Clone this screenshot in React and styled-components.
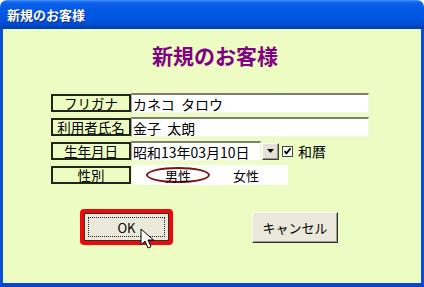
import React from "react";
import styled, { createGlobalStyle } from "styled-components";

const Global = createGlobalStyle`
  html, body { margin: 0; padding: 0; }
  body { width: 424px; height: 287px; overflow: hidden; font-family: "Noto Sans CJK JP", "Noto Sans", sans-serif; }
`;

const Win = styled.div`
  width: 424px;
  height: 287px;
  display: flex;
  flex-direction: column;
  box-sizing: border-box;
  position: relative;
`;

const TitleBar = styled.div`
  height: 29px;
  flex: none;
  border-radius: 7px 7px 0 0;
  background: linear-gradient(#4a9aff 0, #1469ee 2px, #0a5ce6 5px, #0058e4 12px, #0255e0 20px, #0049cc 25px, #003ead 29px);
  display: flex;
  align-items: center;
  padding-left: 7px;
  color: #fff;
  font-size: 13px;
  font-weight: bold;
  text-shadow: 1px 1px 0 #0a2a80;
`;

const Body = styled.div`
  flex: 1;
  background: #ecfcc2;
  border-left: 3px solid #0a4fd8;
  border-right: 3px solid #0a4fd8;
  border-bottom: 4px solid #0a46cc;
  display: flex;
  flex-direction: column;
  align-items: stretch;
`;

const Heading = styled.div`
  margin-top: 13px;
  text-align: center;
  padding-left: 6px;
  color: #820082;
  font-size: 21px;
  font-weight: bold;
  line-height: 26px;
`;

const Form = styled.div`
  margin-top: 25px;
  margin-left: 48px;
  display: flex;
  flex-direction: column;
  gap: 4px;
`;

const Row = styled.div`
  display: flex;
  align-items: center;
  height: 20px;
`;

const Label = styled.div`
  width: 80px;
  height: 18px;
  box-sizing: border-box;
  border: 2px solid #22261a;
  display: flex;
  align-items: center;
  justify-content: center;
  font-size: 13.5px;
  line-height: 14px;
  color: #000;
  flex: none;
`;

const Field = styled.div`
  width: ${(p) => p.$w}px;
  height: 20px;
  box-sizing: border-box;
  background: #fff;
  border-top: 2px solid #7d7f70;
  border-left: 1px solid #a5a896;
  border-right: 1px solid #f4f6ea;
  border-bottom: 1px solid #f4f6ea;
  display: flex;
  align-items: center;
  padding-left: 1px;
  font-size: 14px;
  color: #000;
  white-space: pre;
  flex: none;
`;

const Drop = styled.div`
  width: 17px;
  height: 17px;
  margin-left: 1px;
  box-sizing: border-box;
  background: #e4e2d6;
  border-top: 1px solid #fff;
  border-left: 1px solid #fff;
  border-right: 1px solid #404040;
  border-bottom: 1px solid #404040;
  box-shadow: inset -1px -1px 0 #9a988c;
  display: flex;
  align-items: center;
  justify-content: center;
`;

const Check = styled.div`
  width: 11px;
  height: 11px;
  margin-left: 3px;
  box-sizing: border-box;
  background: #fff;
  border: 1px solid #444;
  display: flex;
  align-items: center;
  justify-content: center;
`;

const CheckText = styled.span`
  margin-left: 5px;
  font-size: 14px;
  color: #000;
`;

const GenderBox = styled.div`
  width: 156px;
  height: 20px;
  margin-left: 1px;
  background: #fff;
  display: flex;
  align-items: center;
  font-size: 13px;
  color: #000;
  flex: none;
`;

const Option = styled.div`
  width: ${(p) => p.$w}px;
  height: 16px;
  margin-left: ${(p) => p.$ml}px;
  box-sizing: border-box;
  display: flex;
  align-items: center;
  justify-content: center;
  border: ${(p) => (p.$sel ? "2px solid #7d1414" : "none")};
  border-radius: 50%;
`;

const Buttons = styled.div`
  margin-top: 24px;
  display: flex;
  align-items: flex-start;
`;

const Focus = styled.div`
  margin-left: 77px;
  width: 93px;
  height: 36px;
  box-sizing: border-box;
  border: 4px solid #ee0a0a;
  border-radius: 4px;
  display: flex;
  position: relative;
`;

const Btn = styled.div`
  box-sizing: border-box;
  width: ${(p) => p.$w}px;
  height: ${(p) => p.$h}px;
  margin-left: ${(p) => p.$ml || 0}px;
  margin-top: ${(p) => p.$mt || 0}px;
  background: #ebe9dc;
  border-top: 1px solid #fff;
  border-left: 1px solid #fff;
  border-right: 1px solid #303030;
  border-bottom: 1px solid #303030;
  box-shadow: inset -1px -1px 0 #a09e90;
  display: flex;
  align-items: center;
  justify-content: center;
  font-size: 13px;
  color: #000;
  position: relative;
`;

const OkBtn = styled(Btn)`
  border: 1px solid #303030;
  box-shadow: none;
  flex: 1;
`;

const Dotted = styled.div`
  position: absolute;
  inset: 3px;
  border: 1px dotted #222;
`;

const Cursor = styled.svg`
  position: absolute;
  left: 56px;
  top: 15px;
`;

export default function App() {
  return (
    <>
      <Global />
      <Win>
        <TitleBar>新規のお客様</TitleBar>
        <Body>
          <Heading>新規のお客様</Heading>
          <Form>
            <Row>
              <Label>フリガナ</Label>
              <Field $w={238}>カネコ  タロウ</Field>
            </Row>
            <Row>
              <Label>利用者氏名</Label>
              <Field $w={238}>金子  太朗</Field>
            </Row>
            <Row>
              <Label>生年月日</Label>
              <Field $w={130}>昭和13年03月10日</Field>
              <Drop>
                <svg width="7" height="4" viewBox="0 0 7 4">
                  <path d="M0 0h7L3.5 4z" fill="#000" />
                </svg>
              </Drop>
              <Check>
                <svg width="9" height="9" viewBox="0 0 9 9">
                  <path d="M1.5 4.2l2 2.2 4-5" stroke="#000" strokeWidth="1.8" fill="none" />
                </svg>
              </Check>
              <CheckText>和暦</CheckText>
            </Row>
            <Row>
              <Label>性別</Label>
              <GenderBox>
                <Option $sel $w={64} $ml={14}>男性</Option>
                <Option $w={40} $ml={16}>女性</Option>
              </GenderBox>
            </Row>
          </Form>
          <Buttons>
            <Focus>
              <OkBtn $w={85} $h={28}>
                <Dotted />
                OK
              </OkBtn>
              <Cursor width="14" height="22" viewBox="0 0 14 22">
                <path d="M1 1v16l4-4 3 7 3-1.3-3-6.7h5.5z" fill="#fff" stroke="#000" strokeWidth="1" strokeLinejoin="miter" />
              </Cursor>
            </Focus>
            <Btn $w={86} $h={31} $ml={79} $mt={3}>キャンセル</Btn>
          </Buttons>
        </Body>
      </Win>
    </>
  );
}
